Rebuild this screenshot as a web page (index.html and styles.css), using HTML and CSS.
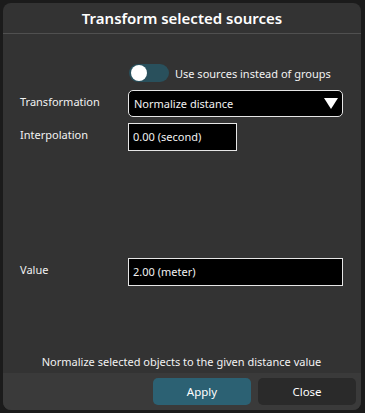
FILE: index.html
```html
<!DOCTYPE html>
<html lang="en">
<head>
<meta charset="UTF-8">
<meta name="viewport" content="width=device-width, initial-scale=1.0">
<title>Transform selected sources</title>
<link rel="stylesheet" href="styles.css">
</head>
<body>

<div class="dialog">
    <div class="dialog-title">Transform selected sources</div>

    <div class="dialog-body">
        <div class="row toggle-row">
            <div class="label"></div>
            <div class="toggle-wrap">
                <span class="toggle"><span class="knob"></span></span>
                <span class="toggle-text">Use sources instead of groups</span>
            </div>
        </div>

        <div class="row">
            <div class="label">Transformation</div>
            <div class="select">
                <span>Normalize distance</span>
                <svg class="arrow" width="14" height="11" viewBox="0 0 14 11"><polygon points="0,0 14,0 7,11" fill="#fff"/></svg>
            </div>
        </div>

        <div class="row">
            <div class="label">Interpolation</div>
            <div class="field short">0.00 (second)</div>
        </div>

        <div class="row value-row">
            <div class="label">Value</div>
            <div class="field wide">2.00 (meter)</div>
        </div>

        <p class="description">Normalize selected objects to the given distance value</p>
    </div>

    <div class="dialog-footer">
        <button class="apply">Apply</button>
        <button class="close">Close</button>
    </div>
</div>

</body>
</html>
```

FILE: styles.css
```css
body {
    font-family: "Noto Sans", "Open Sans", sans-serif;
    margin: 0;
    padding: 0;
    background-color: #1b1b1b;
    color: #f2f2f2;
    width: 365px;
    height: 413px;
    overflow: hidden;
}

.dialog {
    margin: 3px 4px 3px 3px;
    height: 407px;
    background-color: #333333;
    border-radius: 8px;
    display: flex;
    flex-direction: column;
    overflow: hidden;
}

.dialog-title {
    height: 30px;
    line-height: 30px;
    text-align: center;
    font-size: 15px;
    font-weight: 600;
    color: #fff;
    border-bottom: 1px solid #505050;
}

.dialog-body {
    flex: 1;
    display: flex;
    flex-direction: column;
    padding: 0 18px 0 17px;
}

.row {
    display: flex;
    align-items: flex-start;
    margin-top: 6px;
}

.label {
    width: 108px;
    flex-shrink: 0;
    font-size: 11px;
    padding-top: 4px;
}

.toggle-row {
    margin-top: 30px;
    margin-bottom: 2px;
}

.toggle-wrap {
    display: flex;
    align-items: center;
    height: 18px;
    gap: 6px;
}

.toggle {
    width: 40px;
    height: 18px;
    border-radius: 9px;
    background-color: #29505c;
    position: relative;
    margin-left: 1px;
}

.knob {
    position: absolute;
    left: 2px;
    top: 1px;
    width: 16px;
    height: 16px;
    border-radius: 50%;
    background-color: #fff;
}

.toggle-text {
    font-size: 11px;
}

.select {
    flex: 1;
    height: 25px;
    background-color: #000;
    border: 1px solid #e6e6e6;
    border-radius: 5px;
    display: flex;
    align-items: center;
    justify-content: space-between;
    padding: 0 4px 0 5px;
    font-size: 11px;
}

.field {
    height: 26px;
    line-height: 26px;
    background-color: #000;
    border: 1px solid #e6e6e6;
    font-size: 11px;
    padding-left: 4px;
}

.short {
    width: 103px;
}

.wide {
    flex: 1;
}

.value-row {
    margin-top: 107px;
}

.description {
    margin: auto 0 4px;
    text-align: center;
    font-size: 11px;
}

.dialog-footer {
    height: 37px;
    background-color: #3a3a3a;
    display: flex;
    justify-content: flex-end;
    align-items: center;
    gap: 7px;
    padding-right: 5px;
}

.dialog-footer button {
    width: 98px;
    height: 27px;
    border: none;
    border-radius: 5px;
    color: #fff;
    font-family: "Noto Sans", "Open Sans", sans-serif;
    font-size: 11.5px;
}

.apply {
    background-color: #2c6173;
}

.close {
    background-color: #2a2a2a;
}
```
